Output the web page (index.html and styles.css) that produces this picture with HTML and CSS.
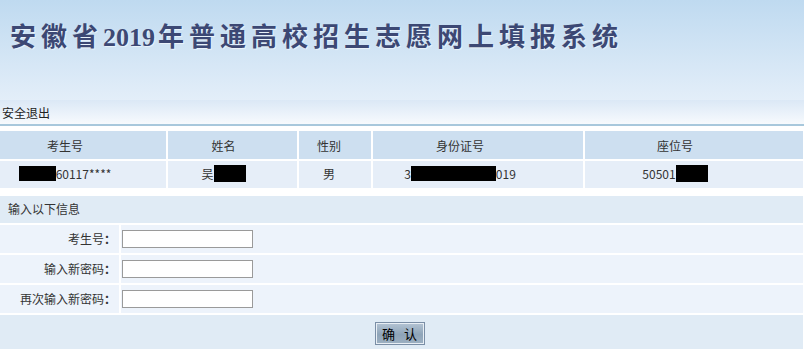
FILE: index.html
```html
<!DOCTYPE html>
<html>
<head>
    <meta charset="utf-8">
    <title>安徽省2019年普通高校招生志愿网上填报系统</title>
    <link rel="stylesheet" href="styles.css">
</head>
<body>
    <div class="banner">
        <h1>安徽省<span class="num">2019</span>年普通高校招生志愿网上填报系统</h1>
    </div>
    <div class="topbar">
        <a href="#">安全退出</a>
    </div>
    <div class="info">
        <div class="th c1">考生号</div>
        <div class="th c2">姓名</div>
        <div class="th c3">性别</div>
        <div class="th c4">身份证号</div>
        <div class="th c5">座位号</div>
        <div class="td c1"><span class="mask w37"></span>60117****</div>
        <div class="td c2">吴<span class="mask w32"></span></div>
        <div class="td c3">男</div>
        <div class="td c4">3<span class="mask w85"></span>019</div>
        <div class="td c5">50501<span class="mask w32"></span></div>
    </div>
    <form class="pwd">
        <div class="caption">输入以下信息</div>
        <label class="lbl" for="ksh">考生号<b>：</b></label>
        <div class="fld"><input type="text" id="ksh"></div>
        <label class="lbl" for="p1">输入新密码<b>：</b></label>
        <div class="fld"><input type="password" id="p1"></div>
        <label class="lbl" for="p2">再次输入新密码<b>：</b></label>
        <div class="fld"><input type="password" id="p2"></div>
        <div class="actions">
            <button type="button">确 认</button>
        </div>
    </form>
</body>
</html>
```

FILE: styles.css
```css
body {
    margin: 0;
    font-family: "Noto Sans CJK SC", sans-serif;
    font-size: 12px;
    color: #333;
    background: #fff;
}
.banner {
    height: 100px;
    background: linear-gradient(#bfdaf0, #e3eef9);
}
.banner h1 {
    margin: 0;
    padding: 21px 0 0 10px;
    font-family: "Liberation Serif", "Noto Sans CJK SC", serif;
    font-size: 26px;
    line-height: 34px;
    font-weight: bold;
    letter-spacing: 5px;
    color: #3c4874;
    text-shadow: 1px 1px 1px rgba(255,255,255,0.6);
}
.banner .num {
    letter-spacing: 0;
    margin-right: 3px;
}
.topbar {
    height: 24px;
    background: linear-gradient(#dbe8f6, #f7fafd);
    border-bottom: 2px solid #a8c8dc;
    padding-left: 2px;
    line-height: 26px;
}
.topbar a {
    color: #222;
    text-decoration: none;
}
.info {
    display: grid;
    grid-template-columns: 166px 129px 72px 210px 218px;
    grid-template-rows: 28px 27px;
    gap: 2px;
    margin-top: 5px;
}
.th, .td {
    display: flex;
    align-items: center;
    justify-content: center;
}
.th {
    background: #cddff0;
}
.td {
    background: #e6eef8;
    padding-bottom: 3px;
}
.c1 { padding-right: 36px; }
.c2 { padding-right: 18px; }
.c3 { padding-right: 12px; }
.c4 { padding-right: 36px; }
.c5 { padding-right: 38px; }
.mask {
    display: inline-block;
    height: 15px;
    background: #000;
}
.w37 { width: 37px; }
.w32 { width: 32px; height: 17px; }
.w85 { width: 85px; }
.pwd {
    display: grid;
    grid-template-columns: 119px 682px;
    grid-template-rows: 27px 28px 28px 28px 40px;
    gap: 2px;
    margin: 8px 0 0;
}
.caption {
    grid-column: 1 / 3;
    background: #e0ebf5;
    padding-left: 8px;
    line-height: 26px;
}
.lbl {
    background: #edf3fb;
    text-align: right;
    padding-right: 3px;
    line-height: 28px;
}
.lbl b {
    font-weight: bold;
}
.fld {
    background: #edf3fb;
    display: flex;
    align-items: center;
    padding-left: 1px;
}
.fld input {
    box-sizing: border-box;
    width: 131px;
    height: 18px;
    border: 1px solid #9a9a9a;
    margin: 0;
    padding: 0 2px;
    background: #fff;
}
.actions {
    grid-column: 1 / 3;
    background: #e0ebf5;
    display: flex;
    justify-content: center;
    padding: 7px 4px 0 0;
}
button {
    width: 50px;
    height: 23px;
    padding: 0;
    border: 1px solid #7a8ea6;
    box-shadow: inset 0 0 0 1px #e8eef4;
    background: linear-gradient(#b4c4d4, #8ea4b8 55%, #9db0c2);
    font-family: "Noto Sans CJK SC", sans-serif;
    font-size: 13px;
    color: #000;
    letter-spacing: 3px;
    text-indent: 3px;
    cursor: pointer;
}
```
